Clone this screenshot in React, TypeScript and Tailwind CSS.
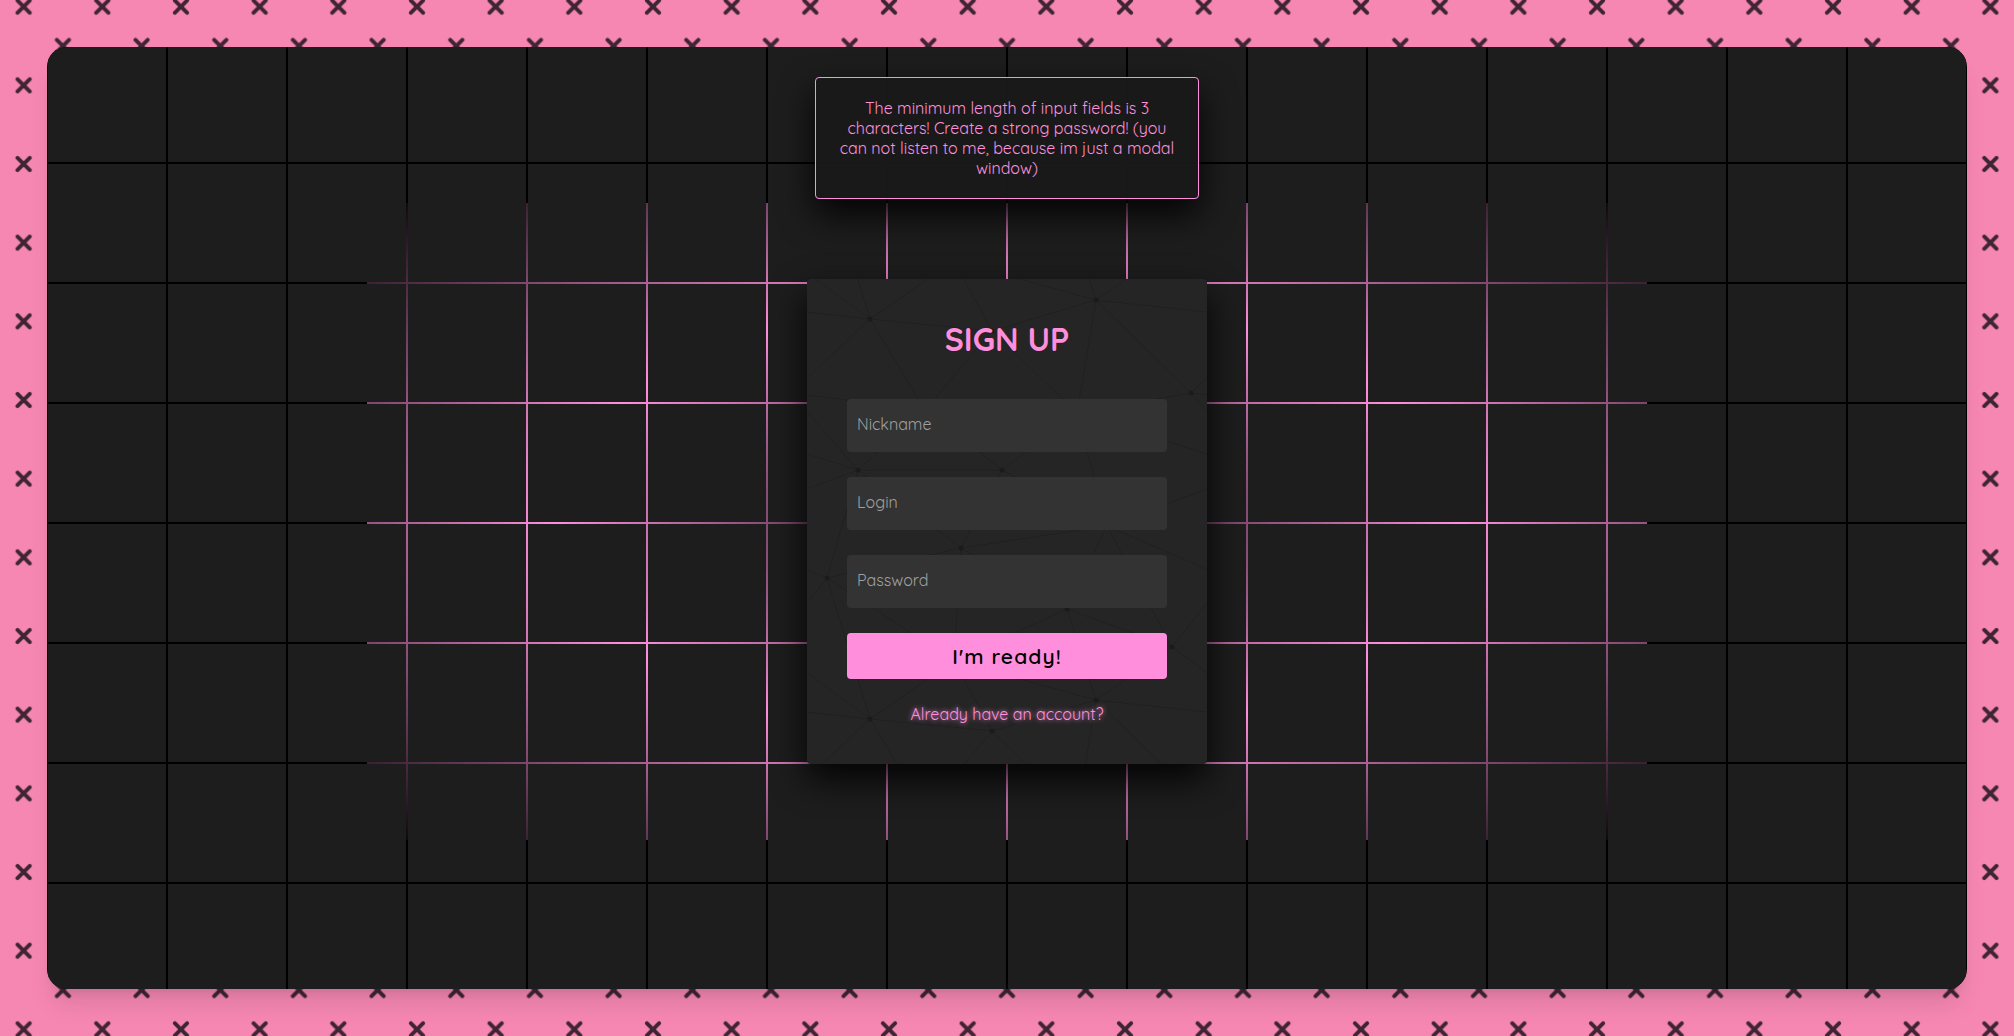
import React from 'react'

type Point = [number, number]

const TILE = 400

const nodes: Record<string, Point> = {
  a: [63, 40],
  b: [289, 21],
  c: [384, 114],
  d: [51, 191],
  e: [195, 191],
  f: [154, 269],
  g: [20, 299],
  h: [260, 330],
  i: [365, 368],
  j: [185, 52],
  k: [118, 131],
  l: [270, 134],
  m: [300, 247],
  n: [147, 382],
}

// Each edge joins two nodes; the last two numbers say in which neighbouring tile the second one lies.
const edges: [string, string, number, number][] = [
  ['a', 'j', 0, 0], ['a', 'k', 0, 0], ['j', 'k', 0, 0], ['j', 'l', 0, 0], ['j', 'b', 0, 0],
  ['b', 'l', 0, 0], ['b', 'c', 0, 0], ['l', 'c', 0, 0], ['k', 'd', 0, 0], ['k', 'e', 0, 0],
  ['l', 'e', 0, 0], ['d', 'e', 0, 0], ['d', 'f', 0, 0], ['d', 'g', 0, 0], ['e', 'f', 0, 0],
  ['e', 'm', 0, 0], ['l', 'm', 0, 0], ['f', 'm', 0, 0], ['f', 'g', 0, 0], ['f', 'h', 0, 0],
  ['f', 'n', 0, 0], ['g', 'n', 0, 0], ['n', 'h', 0, 0], ['h', 'm', 0, 0], ['h', 'i', 0, 0],
  ['i', 'm', 0, 0], ['m', 'g', 1, 0], ['l', 'd', 1, 0], ['m', 'd', 1, 0], ['c', 'k', 1, 0],
  ['c', 'd', 1, 0], ['c', 'a', 1, 0], ['b', 'a', 1, 0], ['i', 'g', 1, 0], ['i', 'a', 1, 1],
  ['n', 'a', 0, 1], ['n', 'b', 0, 1], ['n', 'j', 0, 1], ['h', 'b', 0, 1], ['i', 'b', 0, 1],
  ['g', 'a', 0, 1],
]

const shifts: Point[] = [[0, 0], [-TILE, 0], [0, -TILE], [-TILE, -TILE]]

function NetworkTexture() {
  return (
    <svg aria-hidden="true" className="absolute inset-0 h-full w-full">
      <defs>
        <pattern id="network" width={TILE} height={TILE} patternUnits="userSpaceOnUse">
          {shifts.map(([dx, dy]) => (
            <g key={`${dx},${dy}`} transform={`translate(${dx} ${dy})`}>
              {edges.map(([p, q, tx, ty]) => (
                <line
                  key={`${p}${q}${tx}${ty}`}
                  x1={nodes[p][0]}
                  y1={nodes[p][1]}
                  x2={nodes[q][0] + tx * TILE}
                  y2={nodes[q][1] + ty * TILE}
                  stroke="#1f1f1f"
                  strokeWidth="1"
                />
              ))}
            </g>
          ))}
          {Object.entries(nodes).map(([name, [x, y]]) => (
            <circle key={name} cx={x} cy={y} r="2.6" fill="#1b1b1b" />
          ))}
        </pattern>
      </defs>
      <rect width="100%" height="100%" fill="url(#network)" />
    </svg>
  )
}

function CrossBackdrop() {
  return (
    <svg aria-hidden="true" className="absolute inset-0 h-full w-full">
      <defs>
        <pattern id="crosses" x="-39.33" y="-39.33" width="78.67" height="78.67" patternUnits="userSpaceOnUse">
          <path
            d="M33.2 33.2l12.2 12.2m0-12.2l-12.2 12.2M-6.1 -6.1L6.1 6.1M-6.1 6.1L6.1 -6.1M72.57 -6.1l12.2 12.2M72.57 6.1l12.2 -12.2M-6.1 72.57l12.2 12.2M-6.1 84.77l12.2 -12.2M72.57 72.57l12.2 12.2M72.57 84.77l12.2 -12.2"
            stroke="#3f2533"
            strokeWidth="4"
            strokeLinecap="round"
          />
        </pattern>
      </defs>
      <svg x="50%" y="50%" overflow="visible">
        <rect x="-3000" y="-3000" width="6000" height="6000" fill="url(#crosses)" />
      </svg>
    </svg>
  )
}

const fields = [
  { id: 'nickname', label: 'Nickname', type: 'text' },
  { id: 'login', label: 'Login', type: 'text' },
  { id: 'password', label: 'Password', type: 'password' },
]

export default function App() {
  return (
    <div className="relative flex min-h-screen flex-col overflow-hidden bg-[#f687b3] p-[47px] font-[Quicksand,Lato,sans-serif] text-base leading-5">
      <CrossBackdrop />
      <main className="relative flex flex-1 items-center justify-center rounded-[20px] bg-black shadow-xl">
        <div className="absolute inset-0 flex items-center justify-center overflow-hidden rounded-[20px] pt-[7px]">
          <div className="h-[637px] w-2/3 bg-[radial-gradient(#000,#ff8fdd,#000)]" />
          <div className="absolute inset-0 bg-[conic-gradient(from_270deg_at_118px_118px,#1d1d1d_90deg,transparent_0)] bg-[length:120px_120px] bg-[position:1px_-3px]" />
        </div>

        <div
          role="status"
          className="absolute top-[30px] z-10 w-96 rounded-[4px] border border-[#ff8fdd] bg-[#191919]/95 p-5 text-center text-[#ff8fdd] shadow-[0_15px_35px_rgba(0,0,0,0.9)]"
        >
          The minimum length of input fields is 3 characters! Create a strong password! (you can not listen to me,
          because im just a modal window)
        </div>

        <section className="relative mt-[7px] w-[400px] rounded-[4px] bg-[#252525] p-10 shadow-[0_15px_35px_rgba(0,0,0,0.9)]">
          <NetworkTexture />
          <form className="relative flex flex-col gap-[25px]" onSubmit={(e) => e.preventDefault()}>
            <h1 className="mb-[15px] text-center text-[32px] leading-10 font-bold text-[#ff8fdd]">SIGN UP</h1>
            {fields.map((field) => (
              <div key={field.id} className="relative flex">
                <input
                  id={field.id}
                  type={field.type}
                  placeholder=" "
                  className="peer w-full rounded-[4px] bg-[#333] px-2.5 pt-4 pb-[17px] leading-5 text-white outline-none"
                />
                <label
                  htmlFor={field.id}
                  className="pointer-events-none absolute top-[15px] left-2.5 text-[#a0a0a0] peer-[:not(:placeholder-shown)]:hidden"
                >
                  {field.label}
                </label>
              </div>
            ))}
            <button
              type="submit"
              className="rounded-[4px] bg-[#ff8fdd] py-[11px] text-[21px] leading-6 font-semibold tracking-wider text-black"
            >
              I'm ready!
            </button>
            <a href="#login" className="self-center text-[#ff8fdd] [text-shadow:0_0_5px_#ff8fdd]">
              Already have an account?
            </a>
          </form>
        </section>
      </main>
    </div>
  )
}
